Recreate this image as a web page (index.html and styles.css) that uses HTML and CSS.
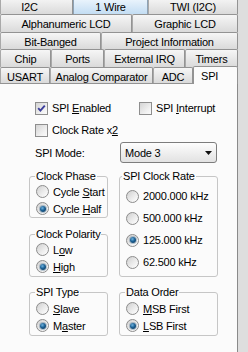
FILE: index.html
```html
<!DOCTYPE html>
<html>
<head>
<meta charset="utf-8">
<link rel="stylesheet" href="styles.css">
</head>
<body>
<div class="window">
  <div class="tabs">
    <div class="tab-row r1">
      <div class="tab first">I2C</div>
      <div class="tab hot">1 Wire</div>
      <div class="tab">TWI (I2C)</div>
    </div>
    <div class="tab-row r2">
      <div class="tab">Alphanumeric LCD</div>
      <div class="tab">Graphic LCD</div>
    </div>
    <div class="tab-row r3">
      <div class="tab">Bit-Banged</div>
      <div class="tab">Project Information</div>
    </div>
    <div class="tab-row r4">
      <div class="tab">Chip</div>
      <div class="tab">Ports</div>
      <div class="tab">External IRQ</div>
      <div class="tab">Timers</div>
    </div>
    <div class="tab-row r5">
      <div class="tab">USART</div>
      <div class="tab">Analog Comparator</div>
      <div class="tab">ADC</div>
      <div class="tab selected">SPI</div>
    </div>
  </div>
  <div class="panel">
    <div class="check-row first-row">
      <label class="check"><span class="box"><svg width="11" height="11" viewBox="0 0 11 11"><path d="M2.2 5.2 L4.4 7.6 L8.8 2.6" fill="none" stroke="#3d3f9c" stroke-width="1.9"/></svg></span><span>SPI <u>E</u>nabled</span></label>
      <label class="check"><span class="box"></span><span>SPI <u>I</u>nterrupt</span></label>
    </div>
    <div class="check-row second-row">
      <label class="check"><span class="box"></span><span>Clock Rate x<u>2</u></span></label>
    </div>
    <div class="mode-row">
      <span class="mode-label">SPI Mode:</span>
      <div class="select"><span>Mode 3</span><svg width="7" height="4" viewBox="0 0 7 4"><path d="M0 0 H7 L3.5 4 Z" fill="#111"/></svg></div>
    </div>
    <div class="groups">
      <fieldset class="group phase">
        <legend>Clock Phase</legend>
        <div class="opt"><span class="radio"></span><span>Cycle <u>S</u>tart</span></div>
        <div class="opt"><span class="radio on"></span><span>Cycle <u>H</u>alf</span></div>
      </fieldset>
      <fieldset class="group rate right">
        <legend>SPI Clock Rate</legend>
        <div class="opt tall"><span class="radio"></span><span>2000.000 kHz</span></div>
        <div class="opt tall"><span class="radio"></span><span>500.000 kHz</span></div>
        <div class="opt tall"><span class="radio on"></span><span>125.000 kHz</span></div>
        <div class="opt tall"><span class="radio"></span><span>62.500 kHz</span></div>
      </fieldset>
      <fieldset class="group polarity">
        <legend>Clock Polarity</legend>
        <div class="opt"><span class="radio"></span><span>L<u>o</u>w</span></div>
        <div class="opt"><span class="radio on"></span><span><u>H</u>igh</span></div>
      </fieldset>
      <fieldset class="group type bottom">
        <legend>SPI Type</legend>
        <div class="opt"><span class="radio"></span><span><u>S</u>lave</span></div>
        <div class="opt"><span class="radio on"></span><span>M<u>a</u>ster</span></div>
      </fieldset>
      <fieldset class="group order bottom right">
        <legend>Data Order</legend>
        <div class="opt"><span class="radio"></span><span><u>M</u>SB First</span></div>
        <div class="opt"><span class="radio on"></span><span><u>L</u>SB First</span></div>
      </fieldset>
    </div>
  </div>
</div>
</body>
</html>
```
FILE: styles.css
```css
html, body {
  margin: 0;
  padding: 0;
}
body {
  width: 248px;
  height: 352px;
  overflow: hidden;
  background: #dedede;
  font-family: "Liberation Sans", Arial, sans-serif;
  font-size: 11px;
  letter-spacing: -0.2px;
  color: #000;
}
.window {
  width: 238px;
}
.tabs {
  display: flex;
  flex-direction: column;
  margin-top: -3px;
}
.tab-row {
  display: grid;
  height: 17px;
}
.r2, .r4 { height: 18px; }
.r5 { height: 16px; }
.r1 { grid-template-columns: 73px 75px 1fr; }
.r2 { grid-template-columns: 132px 1fr; }
.r3 { grid-template-columns: 101px 1fr; }
.r4 { grid-template-columns: 51px 53px 81px 1fr; }
.r5 { grid-template-columns: 50px 103px 40px 1fr; }
.tab {
  box-sizing: border-box;
  border: 1px solid #939393;
  border-left-color: #a9a9a9;
  border-bottom: none;
  border-radius: 2px 2px 0 0;
  background: linear-gradient(#f6f6f6, #dadada);
  text-align: center;
  padding-top: 3px;
  line-height: 13px;
  white-space: nowrap;
  overflow: hidden;
}
.tab.first { padding-right: 14px; }
.tab.hot {
  background: linear-gradient(#eef6fd, #c3ddf3);
  border-color: #8ea3b6;
}
.tab.selected {
  position: relative;
  z-index: 1;
  margin-top: -1px;
  margin-bottom: -1px;
  background: #fbfbfb;
  text-align: left;
  padding-left: 7px;
  border-color: #939393;
}
.panel {
  box-sizing: border-box;
  height: 270px;
  border-top: 1px solid #939393;
  border-right: 1px solid #8a8a8a;
  background: #fbfbfb;
  padding-left: 29px;
  display: flex;
  flex-direction: column;
}
.check-row {
  display: grid;
  grid-template-columns: 104px auto;
  height: 16px;
  padding-left: 6px;
}
.first-row { margin-top: 16px; }
.second-row { margin-top: 6px; }
.check {
  display: flex;
  align-items: center;
  white-space: nowrap;
}
.box {
  box-sizing: border-box;
  width: 13px;
  height: 13px;
  border: 1px solid #8e8e8e;
  background: linear-gradient(135deg, #d4d4d4, #f2f2f2 70%, #fbfbfb);
  margin-right: 4px;
  display: flex;
}
.mode-row {
  display: grid;
  grid-template-columns: 85px 97px;
  align-items: center;
  height: 21px;
  margin-top: 4px;
  padding-left: 6px;
}
.select {
  box-sizing: border-box;
  height: 21px;
  border: 1px solid #7d7d7d;
  border-radius: 3px;
  background: linear-gradient(#fefefe, #ededed 60%, #e2e2e2);
  display: flex;
  align-items: center;
  justify-content: space-between;
  padding: 1px 4px 0 4px;
}
.groups {
  display: grid;
  grid-template-columns: 79px 99px;
  column-gap: 11px;
  row-gap: 9px;
  margin-top: 7px;
}
.group {
  margin: 0;
  min-width: 0;
  border: 1px solid #c6c6c6;
  border-radius: 3px;
  padding: 0 0 0 5px;
}
.group legend {
  padding: 0 1px;
  line-height: 13px;
}
.phase { grid-column: 1; grid-row: 1; }
.rate { grid-column: 2; grid-row: 1 / span 2; padding-top: 2px; }
.rate legend { margin-left: -3px; }
.polarity { grid-column: 1; grid-row: 2; margin-top: 1px; padding-bottom: 1px; }
.type { grid-column: 1; grid-row: 3; }
.order { grid-column: 2; grid-row: 3; }
.bottom { padding-top: 1px; padding-bottom: 1px; }
.opt {
  display: flex;
  align-items: center;
  height: 17px;
  white-space: nowrap;
}
.opt.tall { height: 22px; }
.radio {
  box-sizing: border-box;
  width: 13px;
  height: 13px;
  border-radius: 50%;
  border: 1px solid #8c8c8c;
  background: linear-gradient(135deg, #cfcfcf, #eeeeee 60%, #ffffff);
  margin-left: 1px;
  margin-right: 4px;
  display: flex;
  align-items: center;
  justify-content: center;
}
.radio.on::after {
  content: "";
  width: 6px;
  height: 6px;
  border-radius: 50%;
  background: radial-gradient(circle at 40% 35%, #6fb2de, #1a5f93 45%, #0a3050);
  box-shadow: 0 0 0 1px rgba(30, 80, 120, 0.3);
}
u {
  text-decoration: underline;
  text-underline-offset: 1px;
}
```
